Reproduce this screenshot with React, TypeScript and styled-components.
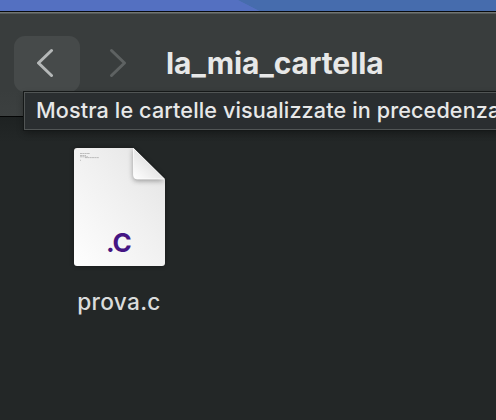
import React from "react";
import styled, { createGlobalStyle } from "styled-components";

const GlobalStyle = createGlobalStyle`
  * { box-sizing: border-box; }
  body { margin: 0; overflow: hidden; background: #232727; }
`;

const Screen = styled.main`
  position: relative;
  display: flex;
  flex-direction: column;
  width: 496px;
  height: 420px;
  overflow: hidden;
  background: #232727;
  color: #e7e8e8;
  font-family: Inter, "Liberation Sans", sans-serif;
`;

const Desktop = styled.div`
  flex: none;
  height: 11px;
  background: linear-gradient(27deg, #5470c1 0 50%, #466cad 50.3%);
`;

const Toolbar = styled.header`
  flex: none;
  display: flex;
  align-items: flex-start;
  height: 106px;
  padding: 22px 0 0 14px;
  border-top: 1px solid #080a0d;
  border-bottom: 1px solid #050606;
  background: linear-gradient(#707473 0 1px, #555958 1px 2px, #393d3d 2px, #393d3d 75%, #3c4040);
`;

const NavButton = styled.button<{ $active?: boolean }>`
  flex: none;
  display: flex;
  align-items: center;
  justify-content: center;
  width: 66px;
  height: 56px;
  padding: 0;
  border: 0;
  border-radius: 11px;
  margin-top: 2px;
  background: ${({ $active }) => ($active ? "#464a4a" : "transparent")};
  color: ${({ $active }) => ($active ? "#b5b8b8" : "#5e6262")};
  & + & { width: 76px; }
`;

const Title = styled.h1`
  margin: 11px 0 0 10px;
  font-size: 30px;
  line-height: 36px;
  font-weight: 700;
  letter-spacing: -0.05px;
  white-space: nowrap;
`;

const Tooltip = styled.div`
  position: absolute;
  left: 24px;
  top: 92px;
  width: 490px;
  height: 38px;
  padding-left: 11px;
  border: 1px solid #515555;
  background: #2a2e30;
  box-shadow: 0 0 0 1px #151818, 0 3px 7px #0005;
  font-size: 21.6px;
  line-height: 34px;
  font-weight: 500;
  letter-spacing: 0.12px;
  white-space: nowrap;
`;

const Files = styled.section`
  flex: 1;
  padding: 27px 0 0 59px;
  background: linear-gradient(#1e2222, #232727 25px);
`;

const FileItem = styled.div`
  display: flex;
  flex-direction: column;
  align-items: center;
  width: 120px;
`;

const FileArt = styled.svg`
  display: block;
  overflow: visible;
`;

const FileName = styled.span`
  margin-top: 18px;
  font-size: 22.7px;
  line-height: 28px;
  font-weight: 500;
  letter-spacing: 0.3px;
  color: #dadcdc;
`;

const Chevron = ({ forward = false }: { forward?: boolean }) => (
  <svg width="20" height="32" viewBox="0 0 20 32" fill="none" stroke="currentColor" strokeWidth="3" strokeLinecap="round" strokeLinejoin="round">
    <path d={forward ? "M3.5 2.5L16.5 15L3.5 27.5" : "M14.5 2.5L1.5 15L14.5 27.5"} />
  </svg>
);

const DocumentIcon = () => (
  <FileArt width="100" height="126" viewBox="0 0 100 126">
    <defs>
      <linearGradient id="paper" x1="0" y1="1" x2="1" y2="0">
        <stop stopColor="#fff" />
        <stop offset="0.55" stopColor="#f0f0f0" />
        <stop offset="1" stopColor="#e2e2e2" />
      </linearGradient>
      <linearGradient id="fold" x1="0" y1="1" x2="0.6" y2="0.4">
        <stop stopColor="#fff" />
        <stop offset="1" stopColor="#e2e2e2" />
      </linearGradient>
      <clipPath id="page">
        <path d="M8 4H64.5L96 35.5V119Q96 122 93 122H8Q5 122 5 119V7Q5 4 8 4Z" />
      </clipPath>
      <filter id="shade" x="-40%" y="-40%" width="180%" height="190%">
        <feGaussianBlur stdDeviation="2.5" />
      </filter>
    </defs>
    <path d="M8 4H64.5L96 35.5V119Q96 122 93 122H8Q5 122 5 119V7Q5 4 8 4Z" fill="#000" opacity=".4" filter="url(#shade)" />
    <g clipPath="url(#page)">
      <rect width="100" height="126" fill="url(#paper)" />
      <path d="M64 4V32Q64 37 68 37H96L64 4Z" fill="#555" opacity=".55" filter="url(#shade)" />
    </g>
    <path d="M64.5 4.5V31Q64.5 35 68 35H95.5Z" fill="url(#fold)" stroke="#fff" strokeWidth=".8" />
    <g stroke="#999" strokeWidth=".6">
      <path d="M11 9.5h10M11 11.5h6M11 12.8h8M16 13.6h14M11 16.3h1" strokeDasharray="2 .35" />
    </g>
    <text x="37" y="107.7" fill="#451583" fontFamily="Inter, sans-serif" fontSize="26" fontWeight="700" letterSpacing="-1">.C</text>
  </FileArt>
);

export default function App() {
  return (
    <>
      <GlobalStyle />
      <Screen>
        <Desktop />
        <Toolbar>
          <NavButton $active aria-label="Indietro"><Chevron /></NavButton>
          <NavButton aria-label="Avanti"><Chevron forward /></NavButton>
          <Title>la_mia_cartella</Title>
        </Toolbar>
        <Files>
          <FileItem>
            <DocumentIcon />
            <FileName>prova.c</FileName>
          </FileItem>
        </Files>
        <Tooltip role="tooltip">Mostra le cartelle visualizzate in precedenza</Tooltip>
      </Screen>
    </>
  );
}
